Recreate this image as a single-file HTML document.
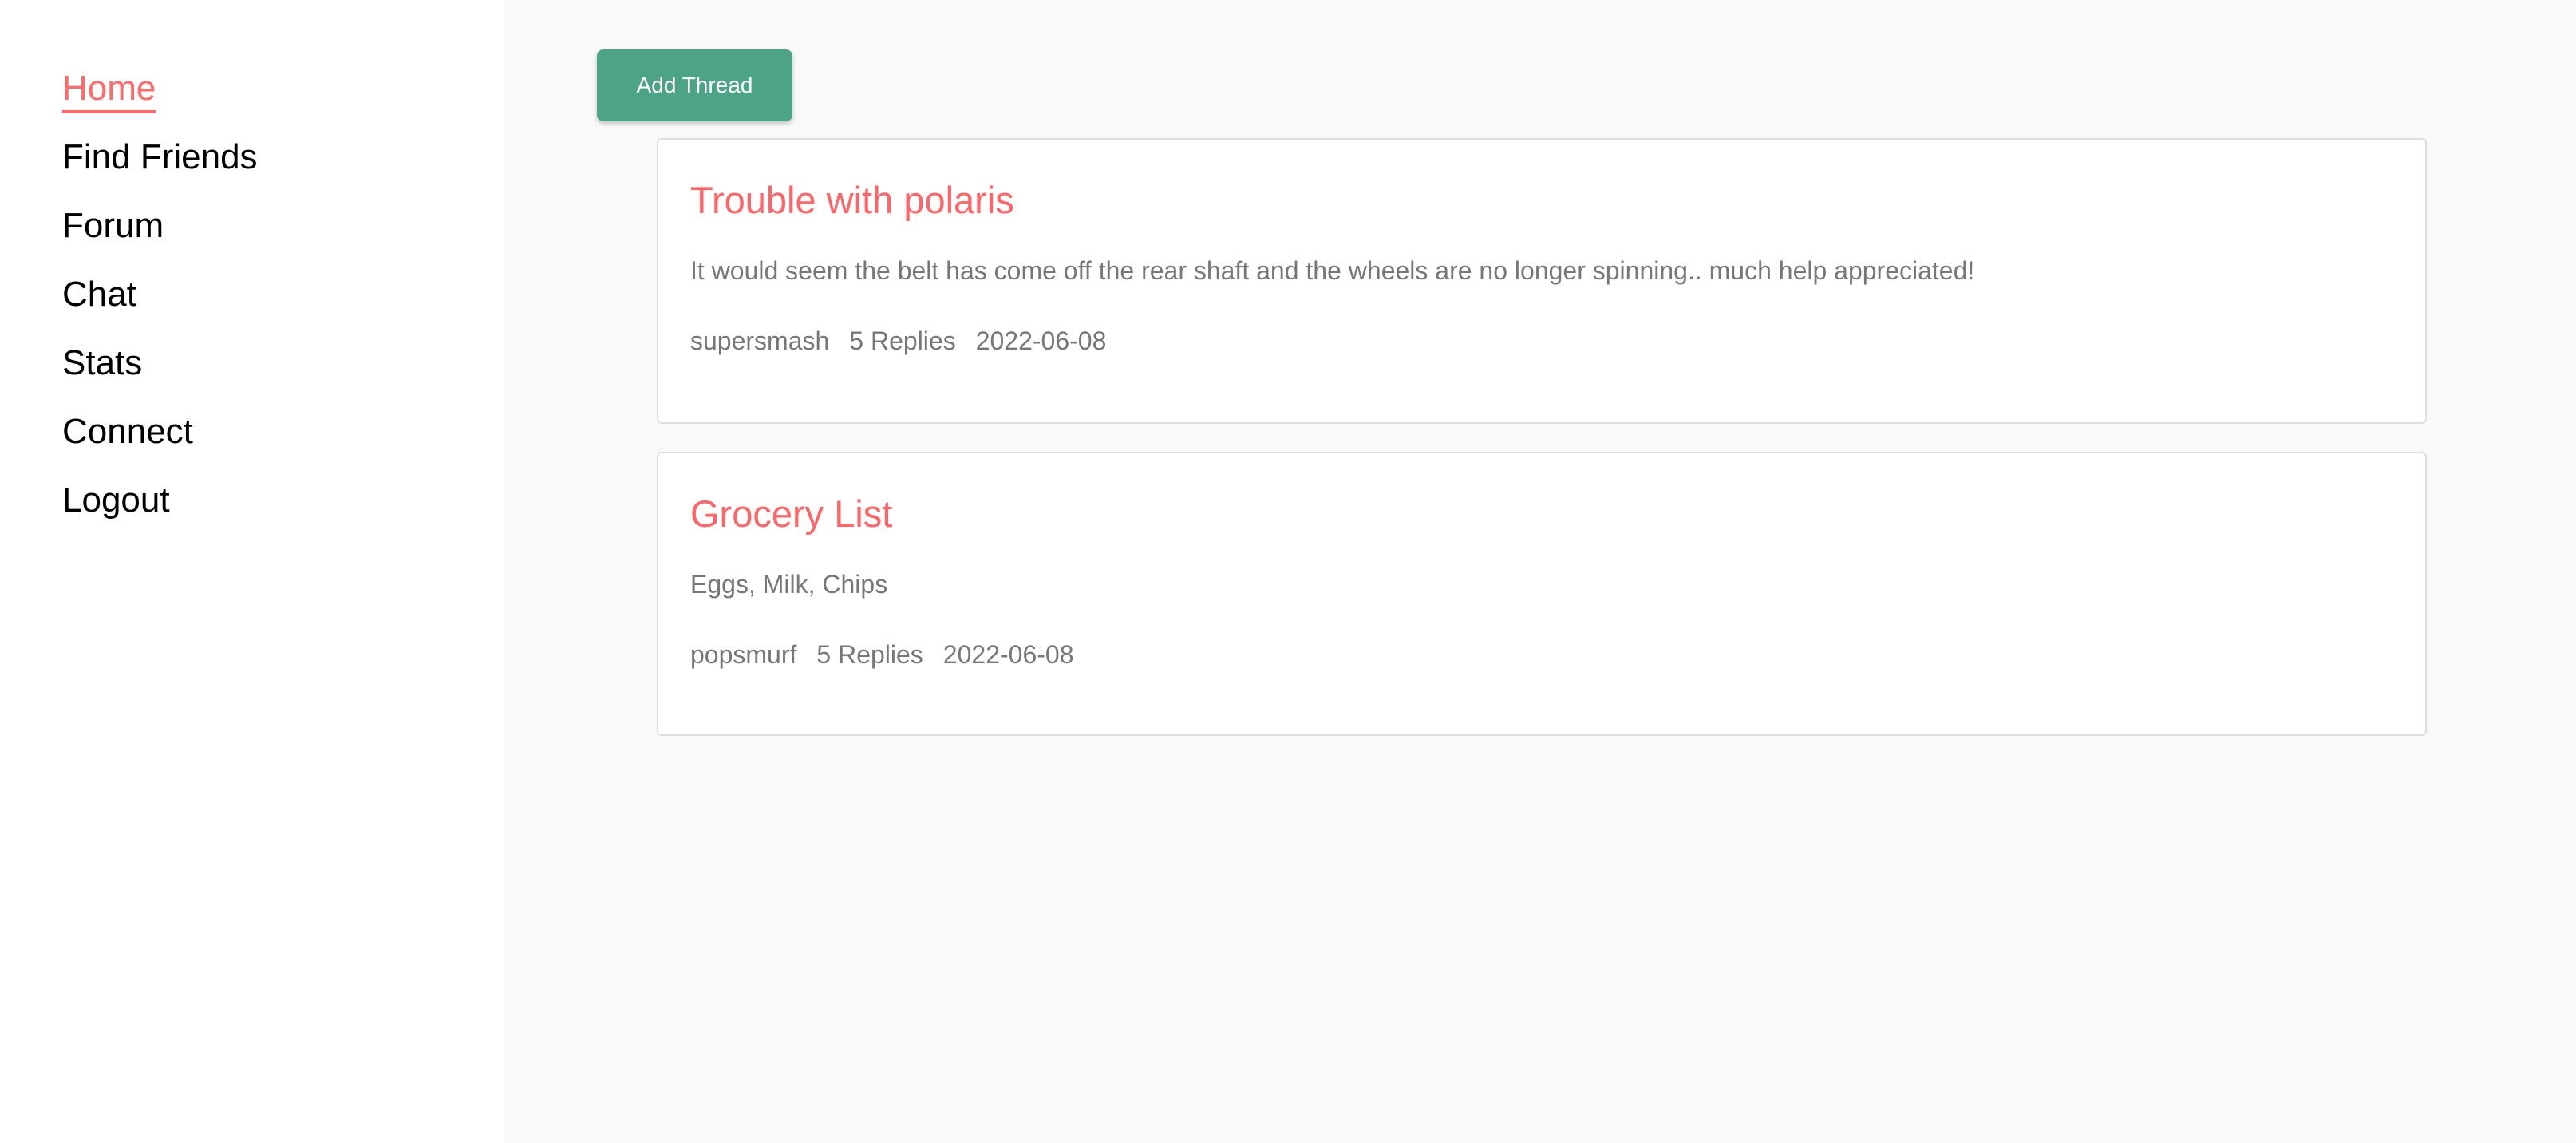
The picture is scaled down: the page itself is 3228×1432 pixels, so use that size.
<!DOCTYPE html>
<html><head><meta charset="utf-8"><style>
*{margin:0;padding:0;box-sizing:border-box}
html,body{width:3228px;height:1432px;overflow:hidden;background:#f9f9f9;font-family:"Liberation Sans",Arial,sans-serif}
.side{position:absolute;left:0;top:0;width:632px;height:1432px;background:#fff}
.nav{position:absolute;left:78px;font-size:44px;line-height:44px;color:#000;white-space:nowrap}
.ul{position:absolute;left:78px;top:138px;width:117px;height:4px;background:#ff6b6b}
.btn{position:absolute;left:748px;top:62px;width:245px;height:90px;background:#4ca386;border-radius:8px;color:#fff;font-size:28px;display:flex;align-items:center;justify-content:center;box-shadow:0 3px 6px rgba(0,0,0,.22)}
.card{position:absolute;left:823px;width:2218px;background:#fff;border:2px solid #dedede;border-radius:6px}
.t{position:absolute;left:865px;font-size:47px;line-height:47px;color:#ff6467;white-space:nowrap}
.b,.m{position:absolute;left:865px;font-size:32px;line-height:32px;color:#777;white-space:nowrap}
.m span{margin-right:25px}
</style></head><body>
<div class="side"></div>
<div class="nav" style="top:89px;color:#ff6b6b">Home</div>
<div class="ul"></div>
<div class="nav" style="top:175px">Find Friends</div>
<div class="nav" style="top:261px">Forum</div>
<div class="nav" style="top:347px">Chat</div>
<div class="nav" style="top:433px">Stats</div>
<div class="nav" style="top:519px">Connect</div>
<div class="nav" style="top:605px">Logout</div>
<div class="btn">Add Thread</div>
<div class="card" style="top:173px;height:358px"></div>
<div class="t" style="top:227px">Trouble with polaris</div>
<div class="b" style="top:323px">It would seem the belt has come off the rear shaft and the wheels are no longer spinning.. much help appreciated!</div>
<div class="m" style="top:411px"><span>supersmash</span><span>5 Replies</span><span>2022-06-08</span></div>
<div class="card" style="top:566px;height:356px"></div>
<div class="t" style="top:620px">Grocery List</div>
<div class="b" style="top:716px">Eggs, Milk, Chips</div>
<div class="m" style="top:804px"><span>popsmurf</span><span>5 Replies</span><span>2022-06-08</span></div>
</body></html>
